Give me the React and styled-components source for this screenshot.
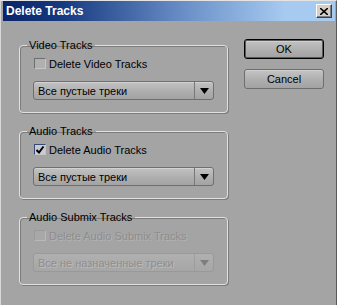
import React from 'react'
import styled, { createGlobalStyle } from 'styled-components'

const Global = createGlobalStyle`
    html, body {
        margin: 0;
        padding: 0;
        background: #a4a4a4;
    }
    * {
        box-sizing: border-box;
    }
`

const Window = styled.div`
    width: 337px;
    height: 305px;
    display: flex;
    flex-direction: column;
    background: #a4a4a4;
    border-left: 1px solid #d8d8d8;
    border-right: 1px solid #5a5a5a;
    border-top: 1px solid #e4e4e4;
    font-family: 'Liberation Sans', Arial, sans-serif;
    font-size: 11px;
    color: #000;
    overflow: hidden;
`

const TitleBar = styled.div`
    height: 20px;
    margin: 0 1px 0 2px;
    display: flex;
    align-items: center;
    justify-content: space-between;
    padding: 0 3px 0 3px;
    background: linear-gradient(90deg, #0a246a 0%, #163a80 18%, #6b90c8 55%, #a6caf0 85%, #a6caf0 100%);
`

const Title = styled.div`
    color: #fff;
    font-weight: bold;
    font-size: 12px;
`

const CloseButton = styled.div`
    width: 16px;
    height: 14px;
    display: flex;
    align-items: center;
    justify-content: center;
    background: #d4d0c8;
    border-top: 1px solid #fff;
    border-left: 1px solid #fff;
    border-right: 1px solid #404040;
    border-bottom: 1px solid #404040;
    box-shadow: inset -1px -1px 0 #808080;
`

const Body = styled.div`
    flex: 1;
    display: flex;
    padding: 18px 0 0 18px;
    gap: 16px;
`

const Groups = styled.div`
    width: 209px;
    display: flex;
    flex-direction: column;
    gap: 12px;
`

const Group = styled.fieldset`
    margin: 0;
    padding: 0 13px 12px 13px;
    border: 1px solid #e0e0e0;
    border-radius: 4px;
    box-shadow: 1px 1px 0 #7c7c7c, inset 1px 1px 0 #7c7c7c;
    display: flex;
    flex-direction: column;
    min-width: 0;
`

const Legend = styled.legend`
    margin-left: -6px;
    padding: 0 3px 0 2px;
    height: 12px;
    line-height: 12px;
    font-size: 11px;
    color: #000;
`

const CheckRow = styled.label`
    margin-top: 6px;
    height: 13px;
    display: flex;
    align-items: center;
    gap: 3px;
    color: ${p => (p.disabled ? '#8d8d8d' : '#000')};
    text-shadow: ${p => (p.disabled ? '1px 1px 0 #b4b4b4' : 'none')};
    font-size: 11px;
`

const Box = styled.span`
    width: 12px;
    height: 11px;
    margin-left: 1px;
    display: flex;
    align-items: center;
    justify-content: center;
    border: 1px solid ${p => (p.checked ? '#3a4a78' : p.disabled ? '#9a9a9a' : '#6e6e6e')};
    border-right-color: ${p => (p.disabled ? '#b8b8b8' : '#c6c6c6')};
    border-bottom-color: ${p => (p.disabled ? '#b8b8b8' : '#c6c6c6')};
    background: ${p => (p.checked ? '#c9cbd3' : p.disabled ? '#a8a8a8' : '#b0b0b0')};
`

const Select = styled.div`
    margin-top: 11px;
    height: 19px;
    display: flex;
    border: 1px solid ${p => (p.disabled ? '#999' : '#6f6f6f')};
    border-radius: 3px;
    background: ${p =>
        p.disabled
            ? 'linear-gradient(#b0b0b0, #a6a6a6)'
            : 'linear-gradient(#c2c2c2, #adadad 60%, #a3a3a3)'};
    box-shadow: ${p => (p.disabled ? 'none' : 'inset 0 1px 0 #d2d2d2')};
`

const SelectText = styled.div`
    flex: 1;
    display: flex;
    align-items: center;
    padding-left: 4px;
    font-size: 11px;
    color: ${p => (p.disabled ? '#8e8e8e' : '#000')};
    text-shadow: ${p => (p.disabled ? '1px 1px 0 #bcbcbc' : 'none')};
    white-space: nowrap;
    overflow: hidden;
`

const SelectArrow = styled.div`
    width: 19px;
    display: flex;
    align-items: center;
    justify-content: center;
    border-left: 1px solid ${p => (p.disabled ? '#9c9c9c' : '#777')};
`

const Buttons = styled.div`
    width: 80px;
    display: flex;
    flex-direction: column;
    gap: 10px;
`

const Button = styled.div`
    height: 20px;
    display: flex;
    align-items: center;
    justify-content: center;
    font-size: 11px;
    border-radius: 3px;
    border: 1px solid ${p => (p.primary ? '#000' : '#6e6e6e')};
    box-shadow: ${p =>
        p.primary ? 'inset 0 0 0 1px #5a5a5a, inset 0 2px 0 #d0d0d0' : 'inset 0 1px 0 #d0d0d0'};
    background: linear-gradient(#c4c4c4, #adadad 60%, #a2a2a2);
`

const Arrow = ({ disabled }) => (
    <svg width="9" height="6" viewBox="0 0 9 6">
        <path d="M0 0h9L4.5 6z" fill={disabled ? '#7e7e7e' : '#000'} />
    </svg>
)

const Check = () => (
    <svg width="10" height="10" viewBox="0 0 10 10">
        <path d="M1.5 5l2.5 2.5L8.5 1.5" stroke="#000" strokeWidth="2" fill="none" />
    </svg>
)

const TrackGroup = ({ title, label, value, checked, disabled }) => (
    <Group>
        <Legend>{title}</Legend>
        <CheckRow disabled={disabled}>
            <Box checked={checked} disabled={disabled}>
                {checked && <Check />}
            </Box>
            {label}
        </CheckRow>
        <Select disabled={disabled}>
            <SelectText disabled={disabled}>{value}</SelectText>
            <SelectArrow disabled={disabled}>
                <Arrow disabled={disabled} />
            </SelectArrow>
        </Select>
    </Group>
)

const App = () => (
    <>
        <Global />
        <Window>
            <TitleBar>
                <Title>Delete Tracks</Title>
                <CloseButton>
                    <svg width="8" height="7" viewBox="0 0 8 7">
                        <path d="M0 0l8 7M8 0L0 7" stroke="#000" strokeWidth="1.6" />
                    </svg>
                </CloseButton>
            </TitleBar>
            <Body>
                <Groups>
                    <TrackGroup
                        title="Video Tracks"
                        label="Delete Video Tracks"
                        value="Все пустые треки"
                    />
                    <TrackGroup
                        title="Audio Tracks"
                        label="Delete Audio Tracks"
                        value="Все пустые треки"
                        checked
                    />
                    <TrackGroup
                        title="Audio Submix Tracks"
                        label="Delete Audio Submix Tracks"
                        value="Все не назначенные треки"
                        disabled
                    />
                </Groups>
                <Buttons>
                    <Button primary>OK</Button>
                    <Button>Cancel</Button>
                </Buttons>
            </Body>
        </Window>
    </>
)

export default App
